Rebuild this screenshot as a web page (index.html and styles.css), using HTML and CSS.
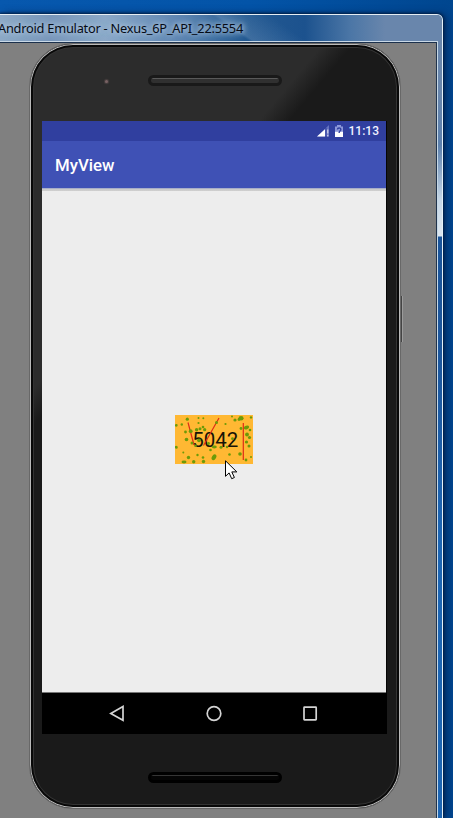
FILE: index.html
```html
<!DOCTYPE html>
<html lang="en">
<head>
<meta charset="utf-8">
<title>Android Emulator</title>
<link rel="stylesheet" href="styles.css">
</head>
<body>
<main class="window">
  <header class="titlebar"><span class="title">Android Emulator - Nexus_6P_API_22:5554</span></header>
  <div class="client">
    <i class="side-button"></i>
    <section class="phone">
      <div class="bezel-top"><i class="sensor"></i><i class="speaker"></i></div>
      <div class="screen">
        <div class="statusbar">
          <svg class="signal" width="13" height="12" viewBox="0 0 13 12"><path d="M0 11.5 12 0v11.5z" fill="#6572c0"/><path d="M0 11.5 8 4.3v7.2z" fill="#fff"/><path d="M10.8 4.5v4M10.8 9.8v1.7" stroke="#dde" stroke-width="1.1"/><path d="M9 3v9" stroke="#303f9f" stroke-width="1"/></svg>
          <svg class="battery" width="8" height="12" viewBox="0 0 8 12"><path d="M2 0h4v1.5h2V12H0V1.5h2z" fill="#8e99da"/><path d="M0 6.8h8V12H0z" fill="#fff"/><path d="M2.4 4.5C2.4 2.5 5.8 2.4 5.8 4.4 5.8 5.8 4.1 6 4.1 8" fill="none" stroke="#303f9f" stroke-width="1.4"/></svg>
          <span class="clock">11:13</span>
        </div>
        <div class="appbar">MyView</div>
        <div class="content">
          <svg class="captcha" width="78" height="49" viewBox="0 0 78 49">
            <rect width="78" height="49" fill="#ffb833"/>
            <text class="code" x="17.3" y="32.3" textLength="46" lengthAdjust="spacingAndGlyphs">5042</text>
            <g fill="none" stroke="#e02b17" stroke-width="1.2"><path d="M13 7.5 19 30M44 3 28.5 30.5M68.3 8v37"/></g>
            <g fill="#6c9a08">
              <circle cx="1.3" cy="10.3" r="1.4"/><circle cx="6.8" cy="9.5" r="1.2"/><circle cx="12.3" cy="4.2" r="1.6"/><circle cx="23.5" cy="3" r="1"/><circle cx="28.3" cy="3.2" r="1"/><circle cx="57" cy="1.6" r="1"/>
              <ellipse cx="66" cy="3.3" rx="2.6" ry="2.2"/><circle cx="76" cy="2.4" r="1.2"/><circle cx="41.5" cy="7.6" r="1.5"/><circle cx="60" cy="5" r="1.6"/><circle cx="64" cy="4.5" r="1.4"/><circle cx="23.5" cy="8" r="1.1"/>
              <circle cx="28" cy="12" r="1.3"/><circle cx="15.7" cy="16.2" r="1.9"/><circle cx="21.6" cy="14.7" r="1.7"/><circle cx="10.5" cy="17" r="1.4"/><circle cx="25" cy="13.7" r="1.5"/><circle cx="29.7" cy="14.7" r="1.6"/>
              <circle cx="50.5" cy="9" r="1.1"/><ellipse cx="71.5" cy="12.5" rx="2.7" ry="1.8" transform="rotate(-20 71.5 12.5)"/><circle cx="66" cy="13.5" r="1.4"/><circle cx="75" cy="15" r="1.3"/><circle cx="72" cy="19.5" r="1.9"/><circle cx="57.5" cy="23.7" r="1.4"/>
              <circle cx="11.5" cy="24.5" r="1.8"/><circle cx="17" cy="28" r="1.5"/><circle cx="24" cy="25.3" r="1.9"/><circle cx="20.5" cy="30.8" r="1.3"/><circle cx="33.5" cy="28.5" r="1.4"/><ellipse cx="39.3" cy="32" rx="2.5" ry="1.4"/>
              <circle cx="46" cy="32.3" r="1.5"/><circle cx="52" cy="32" r="1.2"/><circle cx="35.5" cy="35" r="1.3"/><circle cx="74.5" cy="22.5" r="1.6"/><circle cx="71.5" cy="27" r="1.6"/><circle cx="74" cy="31" r="1.5"/>
              <circle cx="1.3" cy="32.2" r="1.5"/><circle cx="8.3" cy="37.5" r="1"/><circle cx="13.5" cy="42.5" r="1.7"/><ellipse cx="9" cy="47" rx="2.5" ry="1.4"/><circle cx="22.5" cy="40" r="1.2"/><circle cx="28" cy="42.5" r="1.3"/>
              <circle cx="18.7" cy="46.7" r="1.7"/><circle cx="28.5" cy="46.5" r="1.7"/><ellipse cx="39" cy="42.2" rx="2.1" ry="3.1" transform="rotate(30 39 42.2)"/><circle cx="54.5" cy="39.5" r="1.3"/><circle cx="65" cy="39" r="1.8"/><circle cx="71" cy="45" r="1.4"/><circle cx="76" cy="42" r="1"/>
            </g>
          </svg>
        </div>
        <nav class="navbar">
          <svg width="16" height="17" viewBox="0 0 16 17"><path d="M14 1.5v13.8L1.8 8.4z"/></svg>
          <svg width="16" height="17" viewBox="0 0 16 17"><circle cx="8" cy="8.5" r="6.8"/></svg>
          <svg width="16" height="17" viewBox="0 0 16 17"><rect x="2" y="2.2" width="12.2" height="12.6" rx=".5"/></svg>
        </nav>
      </div>
      <div class="bezel-bottom"><i class="speaker lower"></i></div>
    </section>
  </div>
</main>
<svg class="cursor" width="13" height="21" viewBox="0 0 13 21"><path d="M.5.8v15.5l3.6-3.4 2.6 5.8 2.7-1.2-2.6-5.6h5z" fill="#fff" stroke="#000"/></svg>
</body>
</html>
```
FILE: styles.css
```css
* { box-sizing: border-box; }
body {
  margin: 0;
  height: 818px;
  overflow: hidden;
  padding-top: 14px;
  background: linear-gradient(90deg, #0758ae, #0354a8 55%, #00468f 100%);
  font-family: Roboto, sans-serif;
}
.window {
  width: 443px;
  height: 804px;
  padding-right: 5px;
  border-top: 1px solid #e5edf3;
  border-right: 1px solid #e5f1f8;
  border-radius: 0 6px 0 0;
  background: linear-gradient(180deg, #6986ac 0, #6986ac 75px, #5c80ad 130px, #c5d6e6 185px, #dce6ef 221px, #1a549a 222px, #1c559b 330px, #1d65b3 520px);
  box-shadow: 0 0 3px 1px #001d42, 4px 0 8px #002c65;
}
.titlebar {
  height: 26px;
  width: 442px;
  margin-right: -5px;
  display: flex;
  align-items: center;
  border-radius: 0 5px 0 0;
  background: linear-gradient(35deg, transparent 52%, #7597bd55 53%, transparent 64%), linear-gradient(90deg, #8ea9c6 0, #7896ba 50px, #8ba8c8 105px, #5a82b0 185px, #235991 245px, #1c528e 305px, #4b76a6 350px, #6986ac 385px);
}
.title {
  margin-left: -2px;
  white-space: nowrap;
  font: 12.8px/18px "Noto Sans", sans-serif;
  letter-spacing: -.24px;
  color: #050b16;
  text-shadow: 0 0 5px #a9c2db, 0 0 6px #a9c2db, 0 0 8px #a9c2db;
}
.client {
  position: relative;
  width: 438px;
  height: 777px;
  padding: 1px 0 0 29px;
  border-top: 1px solid #c9d8e5;
  border-right: 1px solid #c6d8e6;
  background: #808080;
  box-shadow: inset 0 1px #1b304c, inset -1px 0 #20334c;
}
.side-button {
  position: absolute;
  left: 401px;
  top: 254px;
  width: 2px;
  height: 46px;
  background: linear-gradient(90deg, #444 50%, #9b9b9b 50%);
}
.phone {
  position: relative;
  width: 372px;
  height: 766px;
  padding-left: 12px;
  border: 1px solid #686868;
  border-radius: 44px;
  background: linear-gradient(130deg, #2c2c2c 29%, #1a1a1a 32%);
  box-shadow: inset 0 0 0 1px #bababa, inset 0 0 0 3px #080808, inset 0 0 0 4px #333;
}
.bezel-top { height: 77px; padding-top: 31px; display: flex; }
.sensor { width: 3px; height: 3px; margin: 5px 40px 0 63px; border-radius: 50%; background: #796365; box-shadow: 0 0 1px 1px #494040; }
.speaker {
  width: 134px;
  height: 11px;
  border: 3px solid #191919;
  border-radius: 6px;
  background: linear-gradient(#595959 1px, #303030 1px);
}
.screen {
  width: 345px;
  height: 613px;
  display: flex;
  flex-direction: column;
  border-right: 1px solid #050505;
  background: #ededed;
}
.statusbar {
  height: 20px;
  padding-right: 8px;
  display: flex;
  align-items: center;
  justify-content: flex-end;
  background: #303f9f;
}
.battery { margin: 0 6px 0 5px; }
.clock { margin-right: -1px; color: #f0f2ff; font-size: 12px; font-weight: 500; line-height: 22px; }
.appbar {
  height: 47px;
  padding-left: 13px;
  background: #3f51b5;
  color: #fff;
  font-size: 16.8px;
  font-weight: 500;
  line-height: 49px;
}
.content {
  height: 505px;
  flex: none;
  display: flex;
  align-items: center;
  justify-content: center;
  padding-bottom: 2px;
  border-bottom: 1px solid #777;
  background: linear-gradient(#a8aec8 0, #a8aec8 1px, #cacaca 1px, #cfcfcf 3px, #ededed 3px);
}
.captcha { display: block; margin-right: 1px; }
.code { font: 20px Roboto, sans-serif; fill: #171407; }
.navbar {
  height: 41px;
  margin-right: -1px;
  padding: 0 69px 1px 67px;
  display: flex;
  align-items: center;
  justify-content: space-between;
  background: #000;
  fill: none;
  stroke: #d4d4d4;
  stroke-width: 1.7;
}
.bezel-bottom { padding: 38px 0 0 106px; }
.lower { display: block; border-color: #000; background: linear-gradient(#353535 1px, #050505 1px); }
.cursor { position: absolute; left: 225px; top: 460px; }
```
